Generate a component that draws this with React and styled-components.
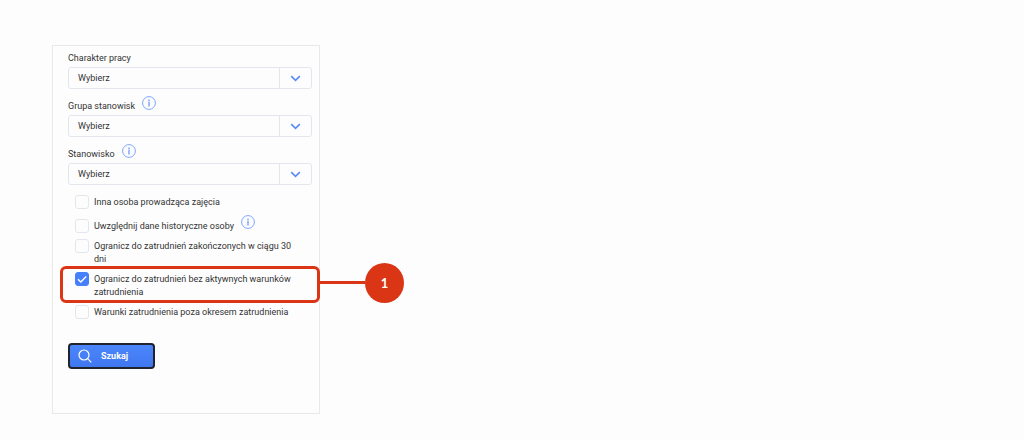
import React from 'react';
import styled, { createGlobalStyle } from 'styled-components';

const GlobalStyle = createGlobalStyle`
  * {
    box-sizing: border-box;
  }

  body {
    margin: 0;
    background: #fdfdfd;
    color: #333;
    font-family: Roboto, sans-serif;
    font-size: 9px;
    line-height: 13px;
  }
`;

const Page = styled.main`
  padding: 45px 52px 26px;
`;

const Panel = styled.form`
  width: 100%;
  max-width: 268px;
  padding: 0 7px 44px 15px;
  border: 1px solid #e8e9eb;
`;

const Field = styled.div`
  margin-bottom: 4px;
`;

const FieldHeader = styled.div`
  display: flex;
  align-items: flex-end;
  gap: 7px;
  height: ${props => (props.$first ? '21px' : '22px')};
  padding: 3px 0 2px;
`;

const InfoButton = styled.button`
  display: flex;
  align-self: flex-start;
  padding: 0;
  border: none;
  background: none;
  color: #6f9cfb;
  cursor: pointer;
`;

const SelectWrap = styled.div`
  display: grid;
  grid-template-columns: 1fr 32px;
  height: 22px;
  border: 1px solid #e3e6ec;
  border-radius: 3px;
`;

const Select = styled.select`
  grid-area: 1 / 1 / 2 / 3;
  appearance: none;
  width: 100%;
  padding: 0 40px 0 9px;
  border: none;
  background: transparent;
  color: #333;
  font: inherit;
`;

const Arrow = styled.span`
  grid-area: 1 / 2 / 2 / 3;
  display: flex;
  align-items: center;
  justify-content: center;
  border-left: 1px solid #e3e6ec;
  color: #5b8dfa;
  pointer-events: none;
`;

const Options = styled.ul`
  display: flex;
  flex-direction: column;
  gap: 6px;
  margin: 0;
  padding: 6px 0 0 7px;
  list-style: none;
`;

const Option = styled.li`
  position: relative;
  display: flex;
  align-items: flex-end;
  gap: 7px;
  min-height: ${props => (props.$info ? '18px' : '14px')};
`;

const OptionLabel = styled.label`
  display: flex;
  gap: 5px;
  max-width: 228px;
`;

const OptionText = styled.span`
  padding-top: 1px;
`;

const Checkbox = styled.input`
  flex: none;
  appearance: none;
  width: 14px;
  height: 14px;
  margin: 0;
  border: 1px solid #e3e6ec;
  border-radius: 3px;

  &:checked {
    border-color: #4680fa;
    background: #4680fa
      url("data:image/svg+xml,%3Csvg xmlns='http://www.w3.org/2000/svg' viewBox='0 0 12 12' fill='none' stroke='white' stroke-width='1.4'%3E%3Cpath d='M2 6.2 4.8 9 10.2 3.4'/%3E%3C/svg%3E")
      center / 12px 12px no-repeat;
  }
`;

const Callout = styled.div`
  position: absolute;
  inset: -6px -8px -4px -15px;
  border: 3px solid #da3616;
  border-radius: 6px;
  pointer-events: none;
`;

const CalloutPointer = styled.div`
  position: absolute;
  top: 45%;
  left: 100%;
  display: flex;
  align-items: center;
  transform: translateY(-50%);

  &::before {
    content: '';
    width: 48px;
    height: 3px;
    background: #da3616;
  }
`;

const CalloutNumber = styled.span`
  width: 39px;
  height: 40px;
  border-radius: 50%;
  background: #da3616;
  color: #fff;
  font: bold 13px/40px Lato, sans-serif;
  text-align: center;
`;

const SearchButton = styled.button`
  display: flex;
  align-items: center;
  gap: 9px;
  width: 87px;
  height: 26px;
  margin-top: 24px;
  padding: 0 8px;
  border: 2px solid #20242e;
  border-radius: 4px;
  background: linear-gradient(#4c86fd, #3f77ef);
  color: #fff;
  font: bold 9px/13px Roboto, sans-serif;
  cursor: pointer;
`;

const InfoIcon = () => (
  <svg width="14" height="14" viewBox="0 0 14 14" fill="none" stroke="currentColor">
    <circle cx="7" cy="7" r="6.4" strokeWidth="0.9" />
    <path d="M7 3.6v1.3M7 5.6v4.8" strokeWidth="1.3" />
  </svg>
);

const ChevronIcon = () => (
  <svg width="11" height="7" viewBox="0 0 11 7" fill="none" stroke="currentColor" strokeWidth="1.7">
    <path d="M1.2 1.2 5.5 5.3 9.8 1.2" />
  </svg>
);

const SearchIcon = () => (
  <svg width="14" height="14" viewBox="0 0 14 14" fill="none" stroke="currentColor" strokeWidth="1.2">
    <circle cx="6" cy="6" r="5" />
    <path d="M9.6 9.6 13.3 13.3" />
  </svg>
);

const Info = () => (
  <InfoButton type="button" aria-label="Informacja">
    <InfoIcon />
  </InfoButton>
);

const fields = [
  { id: 'charakter', label: 'Charakter pracy' },
  { id: 'grupa', label: 'Grupa stanowisk', info: true },
  { id: 'stanowisko', label: 'Stanowisko', info: true },
];

const options = [
  { id: 'inna', label: 'Inna osoba prowadząca zajęcia' },
  { id: 'historyczne', label: 'Uwzględnij dane historyczne osoby', info: true },
  { id: 'zakonczone', label: 'Ogranicz do zatrudnień zakończonych w ciągu 30 dni' },
  {
    id: 'bez-warunkow',
    label: 'Ogranicz do zatrudnień bez aktywnych warunków zatrudnienia',
    checked: true,
    callout: 1,
  },
  { id: 'poza-okresem', label: 'Warunki zatrudnienia poza okresem zatrudnienia' },
];

const App = () => (
  <>
    <GlobalStyle />
    <Page>
      <Panel onSubmit={e => e.preventDefault()}>
        {fields.map((field, index) => (
          <Field key={field.id}>
            <FieldHeader $first={index === 0}>
              <label htmlFor={field.id}>{field.label}</label>
              {field.info && <Info />}
            </FieldHeader>
            <SelectWrap>
              <Select id={field.id}>
                <option>Wybierz</option>
              </Select>
              <Arrow><ChevronIcon /></Arrow>
            </SelectWrap>
          </Field>
        ))}
        <Options>
          {options.map(option => (
            <Option key={option.id} $info={option.info}>
              <OptionLabel htmlFor={option.id}>
                <Checkbox type="checkbox" id={option.id} defaultChecked={option.checked} />
                <OptionText>{option.label}</OptionText>
              </OptionLabel>
              {option.info && <Info />}
              {option.callout && (
                <Callout>
                  <CalloutPointer>
                    <CalloutNumber>{option.callout}</CalloutNumber>
                  </CalloutPointer>
                </Callout>
              )}
            </Option>
          ))}
        </Options>
        <SearchButton type="submit">
          <SearchIcon />
          Szukaj
        </SearchButton>
      </Panel>
    </Page>
  </>
);

export default App;
